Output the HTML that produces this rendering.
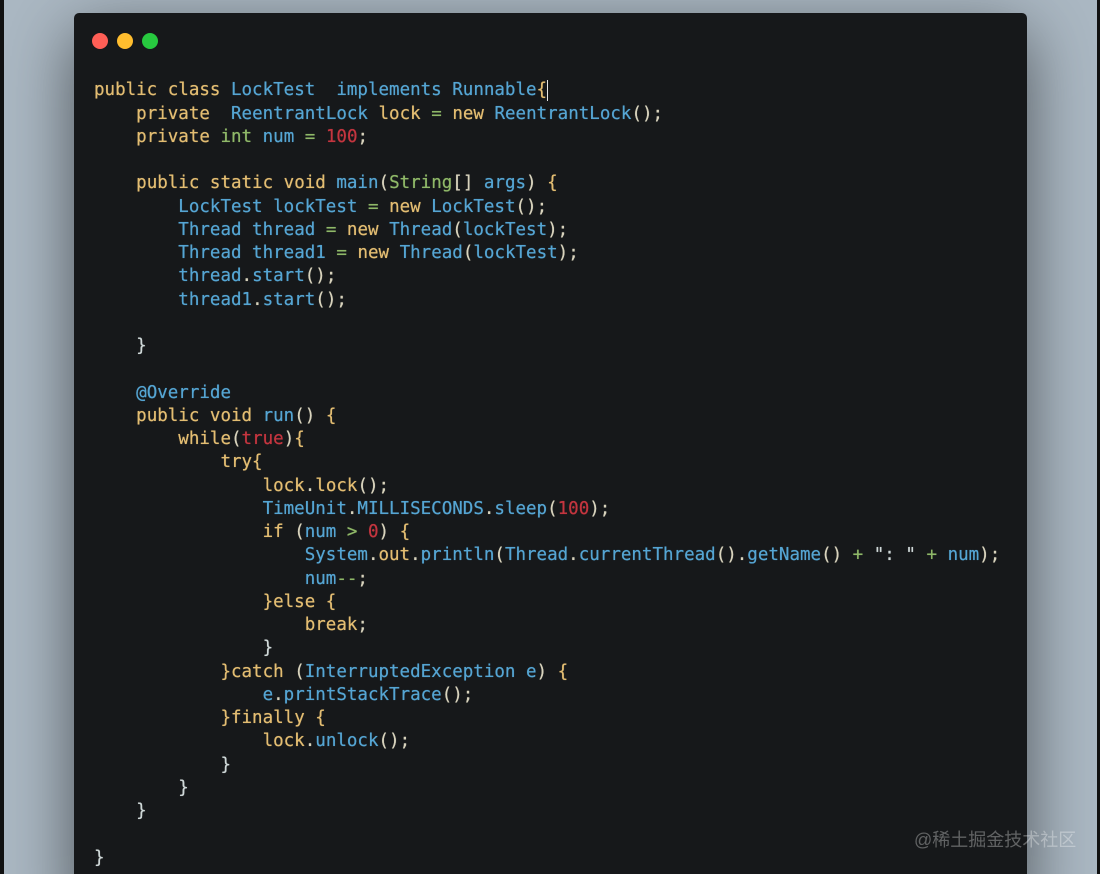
<!DOCTYPE html>
<html><head><meta charset="utf-8">
<style>
html,body{margin:0;padding:0;width:1100px;height:874px;overflow:hidden;background:#111}
#bg{position:absolute;left:4px;top:0;width:1093px;height:874px;background:#abb8c3;overflow:hidden}
#card{position:absolute;left:70px;top:13px;width:953px;height:900px;background:#16181a;border-radius:5px;box-shadow:0 20px 68px rgba(0,0,0,.55)}
.d{position:absolute;top:20px;width:16px;height:16px;border-radius:50%}
pre{position:absolute;left:94px;top:79.4px;margin:0;font-family:"DejaVu Sans Mono","Liberation Mono",monospace;font-size:17.5px;line-height:23.25px;color:#d8d3bd;white-space:pre;text-shadow:0 0 .6px currentColor}
.k{color:#e3bd72}.b{color:#55a5d3}.g{color:#8fb868}.r{color:#c4353f}.w{color:#cfd8d8}
#cur{position:absolute;left:547px;top:80px;width:1px;height:21px;background:#e6e6e6}
#wm{position:absolute;left:914px;top:827.5px;font-family:"Liberation Sans","Noto Sans CJK SC",sans-serif;font-size:18px;line-height:24px;color:rgba(255,255,255,.32);white-space:nowrap}
</style></head><body>
<div id="bg"><div id="card">
<div class="d" style="left:18px;background:#ff5f56"></div>
<div class="d" style="left:43px;background:#ffbd2e"></div>
<div class="d" style="left:68px;background:#27c93f"></div>
</div></div>
<pre><span class="k">public class</span> <span class="b">LockTest</span>  <span class="b">implements Runnable</span><span class="k">{</span>
    <span class="k">private</span>  <span class="b">ReentrantLock</span> <span class="k">lock</span> <span class="g">=</span> <span class="k">new</span> <span class="b">ReentrantLock</span>();
    <span class="k">private</span> <span class="g">int</span> <span class="b">num</span> <span class="g">=</span> <span class="r">100</span>;

    <span class="k">public static void</span> <span class="b">main</span>(<span class="g">String</span>[] <span class="b">args</span>) <span class="k">{</span>
        <span class="b">LockTest lockTest</span> <span class="g">=</span> <span class="k">new</span> <span class="b">LockTest</span>();
        <span class="b">Thread thread</span> <span class="g">=</span> <span class="k">new</span> <span class="b">Thread</span>(<span class="b">lockTest</span>);
        <span class="b">Thread thread1</span> <span class="g">=</span> <span class="k">new</span> <span class="b">Thread</span>(<span class="b">lockTest</span>);
        <span class="b">thread</span>.<span class="b">start</span>();
        <span class="b">thread1</span>.<span class="b">start</span>();

    <span class="w">}</span>

    <span class="b">@Override</span>
    <span class="k">public void</span> <span class="b">run</span>() <span class="k">{</span>
        <span class="k">while</span>(<span class="r">true</span>)<span class="k">{</span>
            <span class="k">try{</span>
                <span class="k">lock</span>.<span class="k">lock</span>();
                <span class="b">TimeUnit</span>.<span class="b">MILLISECONDS</span>.<span class="b">sleep</span>(<span class="r">100</span>);
                <span class="k">if</span> (<span class="b">num</span> <span class="g">&gt;</span> <span class="r">0</span>) <span class="k">{</span>
                    <span class="b">System</span>.<span class="k">out</span>.<span class="b">println</span>(<span class="b">Thread</span>.<span class="b">currentThread</span>().<span class="b">getName</span>() <span class="g">+</span> <span class="w">": "</span> <span class="g">+</span> <span class="b">num</span>);
                    <span class="b">num</span><span class="g">--</span>;
                <span class="k">}else {</span>
                    <span class="k">break</span>;
                <span class="w">}</span>
            <span class="k">}catch</span> (<span class="b">InterruptedException e</span>) <span class="k">{</span>
                <span class="b">e</span>.<span class="b">printStackTrace</span>();
            <span class="k">}finally {</span>
                <span class="k">lock</span>.<span class="b">unlock</span>();
            <span class="w">}</span>
        <span class="w">}</span>
    <span class="w">}</span>

<span class="w">}</span></pre>
<div id="cur"></div>
<div id="wm">@稀土掘金技术社区</div>
</body></html>
